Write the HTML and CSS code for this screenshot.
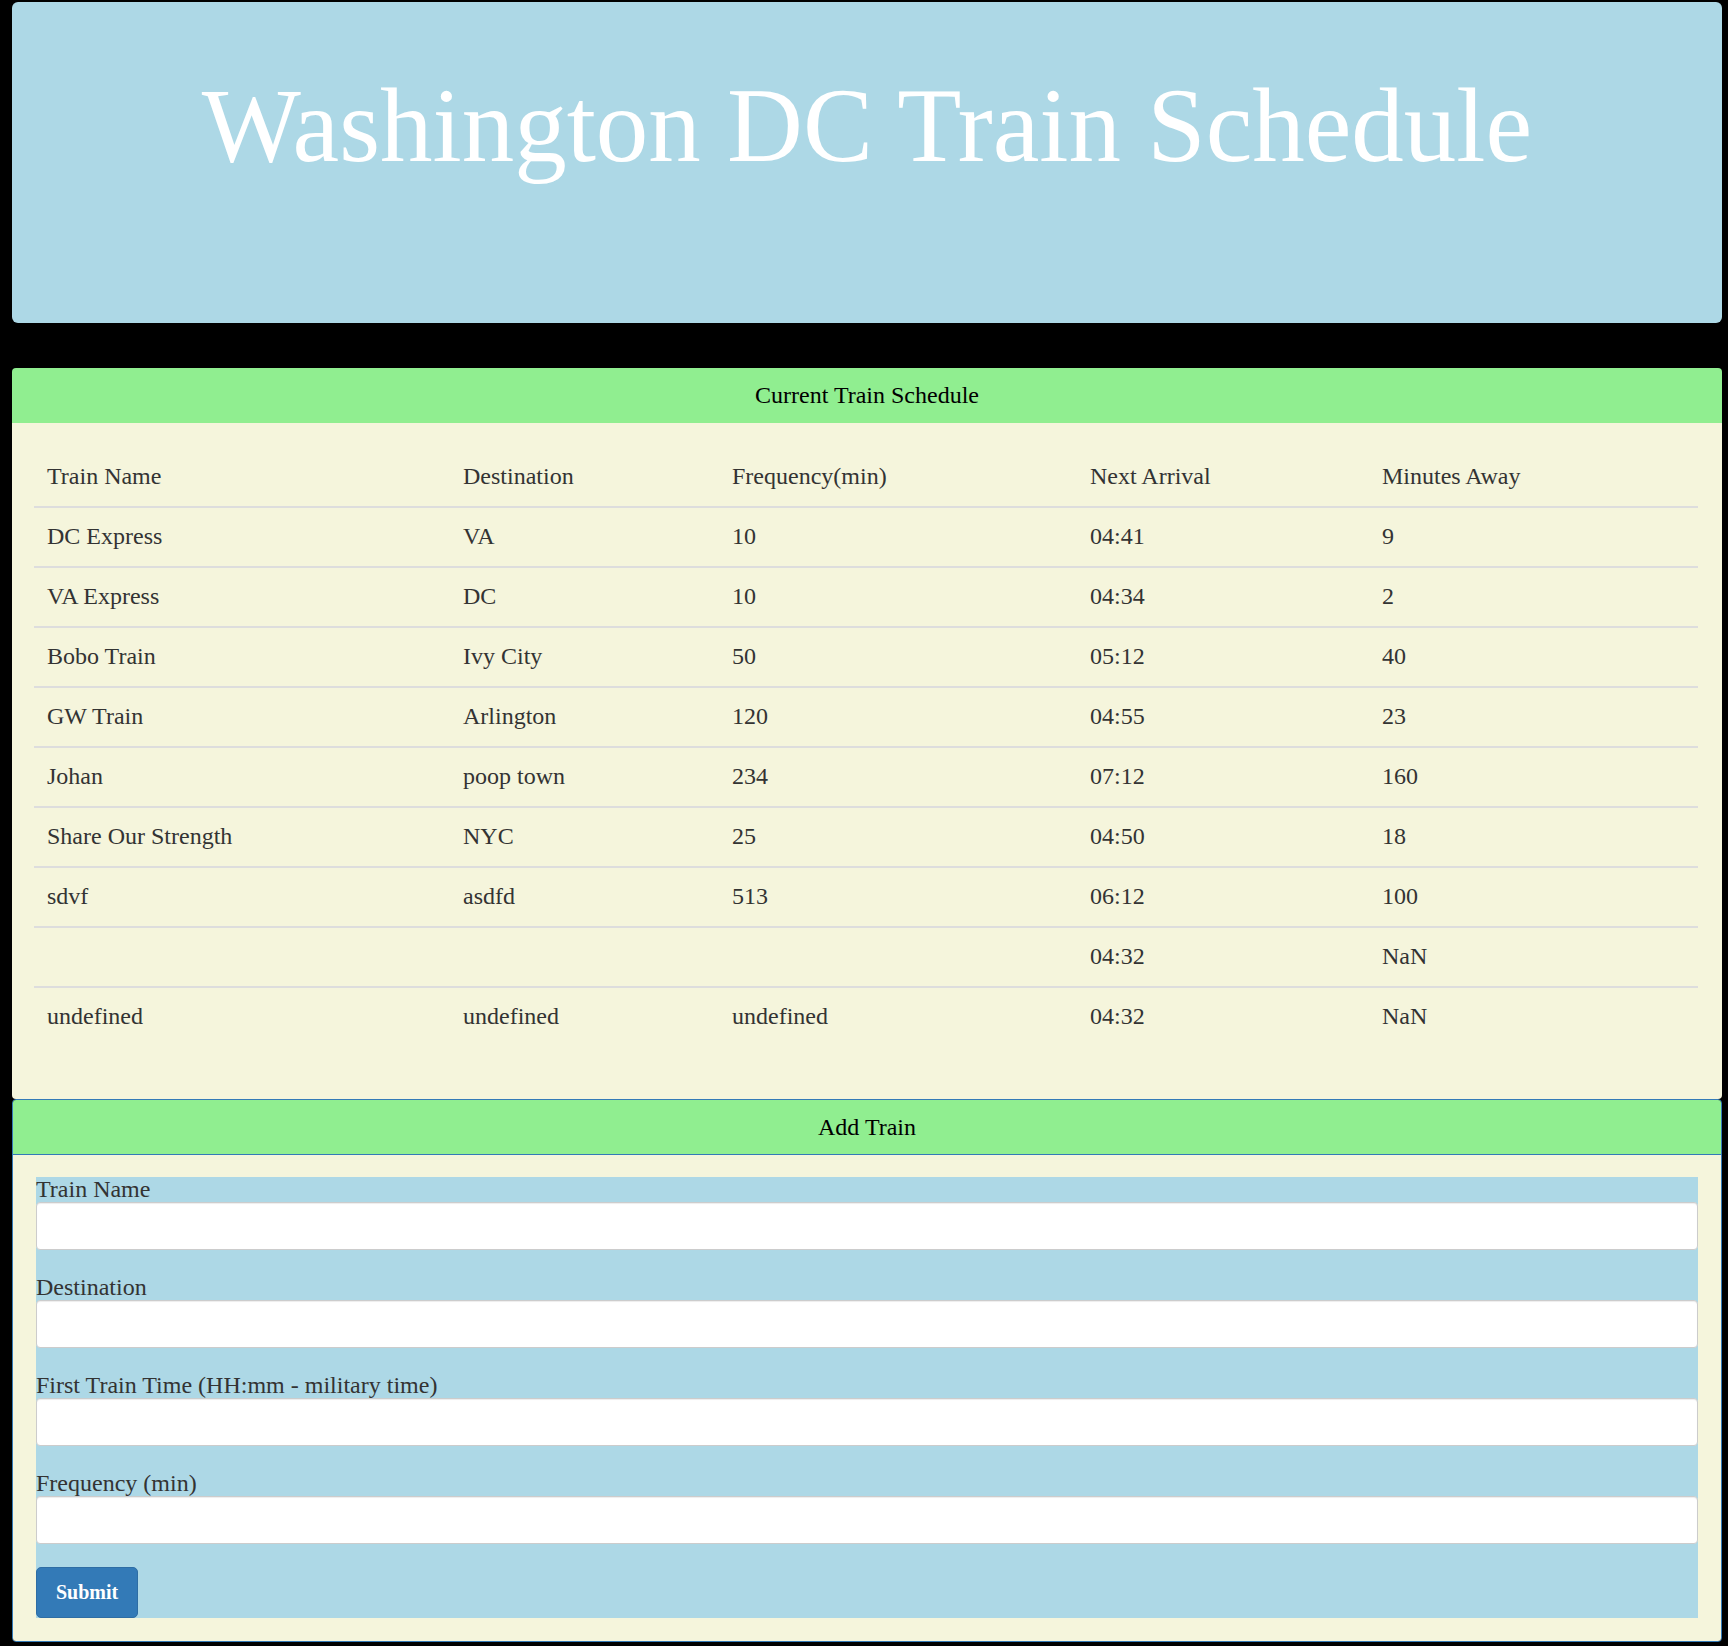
FILE: index.html
```html
<!DOCTYPE html>
<html lang="en">
<head>
<meta charset="utf-8">
<title>Washington DC Train Schedule</title>
<link rel="stylesheet" href="styles.css">
</head>
<body>
<div class="container">
  <header class="jumbotron">
    <h1 class="title">Washington DC Train Schedule</h1>
  </header>

  <section class="panel panel-schedule">
    <div class="panel-heading">Current Train Schedule</div>
    <div class="panel-body schedule-body">
      <table class="schedule">
        <colgroup>
          <col class="c1"><col class="c2"><col class="c3"><col class="c4"><col class="c5">
        </colgroup>
        <thead>
          <tr><th>Train Name</th><th>Destination</th><th>Frequency(min)</th><th>Next Arrival</th><th>Minutes Away</th></tr>
        </thead>
        <tbody>
          <tr><td>DC Express</td><td>VA</td><td>10</td><td>04:41</td><td>9</td></tr>
          <tr><td>VA Express</td><td>DC</td><td>10</td><td>04:34</td><td>2</td></tr>
          <tr><td>Bobo Train</td><td>Ivy City</td><td>50</td><td>05:12</td><td>40</td></tr>
          <tr><td>GW Train</td><td>Arlington</td><td>120</td><td>04:55</td><td>23</td></tr>
          <tr><td>Johan</td><td>poop town</td><td>234</td><td>07:12</td><td>160</td></tr>
          <tr><td>Share Our Strength</td><td>NYC</td><td>25</td><td>04:50</td><td>18</td></tr>
          <tr><td>sdvf</td><td>asdfd</td><td>513</td><td>06:12</td><td>100</td></tr>
          <tr><td></td><td></td><td></td><td>04:32</td><td>NaN</td></tr>
          <tr><td>undefined</td><td>undefined</td><td>undefined</td><td>04:32</td><td>NaN</td></tr>
        </tbody>
      </table>
    </div>
  </section>

  <section class="panel panel-add">
    <div class="panel-heading">Add Train</div>
    <div class="panel-body add-body">
      <form class="train-form">
        <div class="group">
          <label class="field-label" for="name">Train Name</label>
          <input class="field" id="name" type="text">
        </div>
        <div class="group">
          <label class="field-label" for="dest">Destination</label>
          <input class="field" id="dest" type="text">
        </div>
        <div class="group">
          <label class="field-label" for="first">First Train Time (HH:mm - military time)</label>
          <input class="field" id="first" type="text">
        </div>
        <div class="group last">
          <label class="field-label" for="freq">Frequency (min)</label>
          <input class="field" id="freq" type="text">
        </div>
        <button class="btn-submit" type="button">Submit</button>
      </form>
    </div>
  </section>
</div>
</body>
</html>
```

FILE: styles.css
```css
html {
  background: #000;
}

body {
  margin: 2px 6px 3px 12px;
  background: #000;
  font-family: "Liberation Serif", "Times New Roman", serif;
  color: #333;
}

.container {
  display: flex;
  flex-direction: column;
}

.jumbotron {
  background: #add8e6;
  border-radius: 6px;
  height: 321px;
  box-sizing: border-box;
  padding-top: 67px;
  margin-bottom: 45px;
}

.title {
  margin: 0;
  text-align: center;
  color: #fff;
  font-weight: normal;
  font-size: 105px;
  line-height: 114px;
}

.panel {
  border-radius: 4px;
  overflow: hidden;
}

.panel-heading {
  background: #90ee90;
  color: #000;
  text-align: center;
  font-size: 24px;
  line-height: 35px;
  padding: 10px 15px;
}

.panel-body {
  background: #f5f5dc;
}

.schedule-body {
  padding: 24px 24px 53px 22px;
}

.schedule {
  width: 100%;
  border-collapse: separate;
  border-spacing: 0;
  table-layout: fixed;
  font-size: 24px;
  line-height: 33px;
  color: #333;
}

.c1 { width: 416px; }
.c2 { width: 269px; }
.c3 { width: 358px; }
.c4 { width: 292px; }
.c5 { width: 329px; }

.schedule th {
  text-align: left;
  font-weight: normal;
  padding: 13px;
}

.schedule td {
  padding: 12px 13px 13px;
  height: 33px;
  border-top: 2px solid #ddd;
}

.panel-add {
  border: 1px solid #337ab7;
}

.panel-add .panel-heading {
  line-height: 34px;
  border-bottom: 1px solid #337ab7;
}

.add-body {
  padding: 22px 23px 23px;
}

.train-form {
  background: #add8e6;
  display: flex;
  flex-direction: column;
  align-items: flex-start;
}

.group {
  align-self: stretch;
  margin-bottom: 25px;
}

.group.last {
  margin-bottom: 23px;
}

.field-label {
  display: block;
  font-size: 24px;
  line-height: 25px;
  color: #333;
}

.field {
  display: block;
  width: 100%;
  height: 48px;
  box-sizing: border-box;
  margin: 0;
  border: 1px solid #ccc;
  border-radius: 4px;
  background: #fff;
  box-shadow: inset 0 1px 1px rgba(0, 0, 0, 0.075);
  font-family: inherit;
  font-size: 20px;
}

.btn-submit {
  margin: 0;
  font-family: "Liberation Serif", "Times New Roman", serif;
  font-weight: bold;
  font-size: 20px;
  line-height: 23px;
  color: #fff;
  background: #337ab7;
  border: 1px solid #2e6da4;
  border-radius: 5px;
  padding: 13px 19px;
}
```
